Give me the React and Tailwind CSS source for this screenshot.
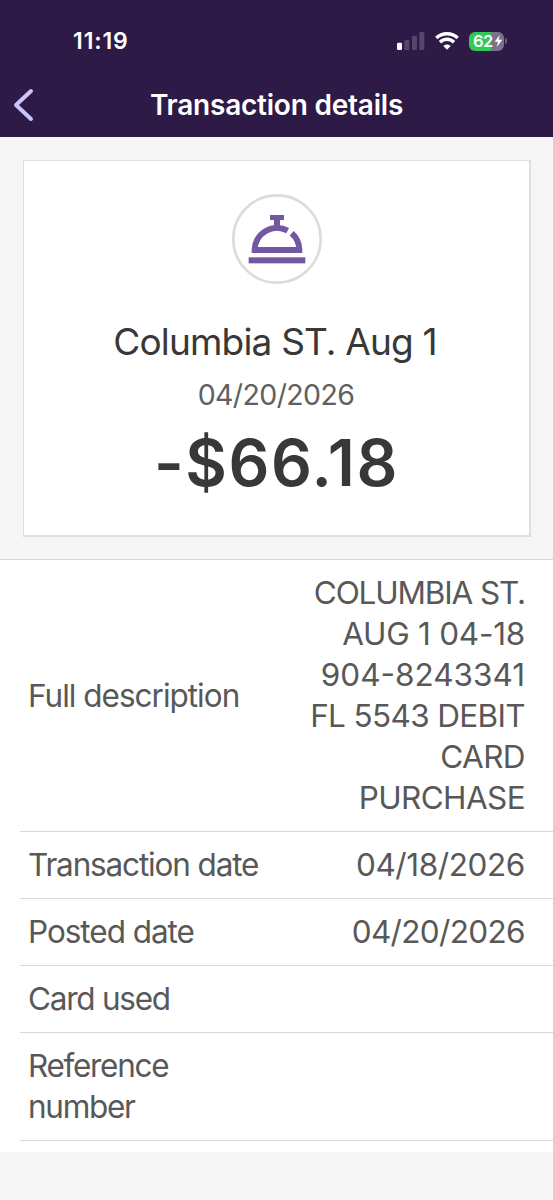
import React from "react";

const rows = [
    {
        label: "Full description",
        labelClass: "tracking-[-1px]",
        lines: [
            { text: "COLUMBIA ST.", className: "tracking-[-1.15px]" },
            { text: "AUG 1 04-18", className: "tracking-[-0.25px]" },
            { text: "904-8243341", className: "tracking-[0px]" },
            { text: "FL 5543 DEBIT", className: "tracking-[-0.65px]" },
            { text: "CARD", className: "tracking-[-0.6px]" },
            { text: "PURCHASE", className: "tracking-[-0.6px]" },
        ],
    },
    {
        label: "Transaction date",
        labelClass: "tracking-[-1.15px]",
        lines: [{ text: "04/18/2026", className: "tracking-[-0.4px]" }],
    },
    {
        label: "Posted date",
        labelClass: "tracking-[-1.04px]",
        lines: [{ text: "04/20/2026", className: "tracking-[-0.65px]" }],
    },
    { label: "Card used", labelClass: "tracking-[-1.25px]", lines: [] },
    { label: "Reference number", labelClass: "tracking-[-1.3px]", lines: [] },
];

const SignalIcon = () => (
    <svg className="h-[18px] w-7" viewBox="0 0 84 54">
        <rect x="0" y="32" width="15" height="22" rx="4" fill="#fff" />
        <rect x="22" y="24" width="15" height="30" rx="4" fill="#56456c" />
        <rect x="45" y="12" width="15" height="42" rx="4" fill="#56456c" />
        <rect x="67" y="0" width="15" height="54" rx="4" fill="#56456c" />
    </svg>
);

const WifiIcon = () => (
    <svg className="h-[18px] w-6" viewBox="0 0 72 54" fill="none" stroke="#fff" strokeWidth="10.5">
        <path d="M4 18 C21 1 51 1 68 18" />
        <path d="M15 31 C27 19 45 19 57 31" />
        <path d="M25 42 C31 36 41 36 47 42 L36 53 Z" fill="#fff" stroke="none" />
    </svg>
);

const BatteryIcon = () => (
    <div className="flex items-center gap-px">
        <div className="flex h-[19px] w-[35px] items-center rounded-[6px] bg-[linear-gradient(90deg,#34c759_63%,#7d728c_63%)] pl-1">
            <span className="text-[16.5px] leading-none font-semibold tracking-[-0.5px] text-white">62</span>
            <svg className="ml-px h-3 w-[9px]" viewBox="0 0 27 36" fill="#fff">
                <path d="M17 0 L2 20 H12 L8 36 L25 14 H14 Z" />
            </svg>
        </div>
        <div className="h-[6px] w-[2px] rounded-r-full bg-[#6c607c]" />
    </div>
);

const BellIcon = () => (
    <svg className="h-[90px] w-[90px]" viewBox="0 0 270 270" fill="none">
        <circle cx="135" cy="135" r="131" stroke="#dcdcdc" strokeWidth="8" />
        <g fill="#7357a0">
            <path d="M114 63 H156 V78 H144 V98 H126 V78 H114 Z" />
            <rect x="50" y="190" width="170" height="18" />
        </g>
        <path
            d="M167 110 A67 67 0 0 0 68 168 H202 A67 67 0 0 0 179 118"
            stroke="#7357a0"
            strokeWidth="18"
        />
    </svg>
);

const DetailRow = ({ row }) => (
    <div className="ml-5 flex items-center justify-between border-b border-[#d8d8d8] pt-3 pr-7 pb-[13px] pl-2">
        <div className={`w-[235px] ${row.labelClass}`}>{row.label}</div>
        <div className="text-right whitespace-nowrap">
            {row.lines.map((line) => (
                <div key={line.text} className={line.className}>
                    {line.text}
                </div>
            ))}
        </div>
    </div>
);

const App = () => {
    return (
        <div className="h-[1200px] w-[553px] overflow-hidden bg-[#f6f6f6] font-['Inter',sans-serif]">
            <header className="h-[137px] bg-[#2e1a47] text-white">
                <div className="flex h-[72px] items-center justify-between pt-[10px] pr-[46px] pl-[73px]">
                    <span className="text-[23px] font-semibold tracking-[0.9px]">11:19</span>
                    <div className="flex items-center gap-[10px]">
                        <SignalIcon />
                        <WifiIcon />
                        <BatteryIcon />
                    </div>
                </div>
                <div className="grid h-[65px] grid-cols-[60px_1fr_60px] items-center">
                    <svg className="ml-3 h-9 w-6" viewBox="0 0 24 36" fill="none">
                        <path d="M19 4 L4 18 L19 32" stroke="#c9c5fa" strokeWidth="4" strokeLinecap="round" strokeLinejoin="round" />
                    </svg>
                    <h1 className="text-center text-[28px] font-semibold tracking-[-0.22px] whitespace-nowrap">Transaction details</h1>
                </div>
            </header>

            <section className="border-b border-[#d8d8d8] pt-[23px] pr-[22px] pb-[22px] pl-[23px]">
                <div className="flex h-[377px] flex-col items-center border-t border-r-2 border-b-2 border-l border-[#dedede] bg-white pt-[33px]">
                    <BellIcon />
                    <div className="mt-[34px] mr-[3px] text-[37px] leading-[48px] tracking-[-0.82px] text-[#383838]">Columbia ST. Aug 1</div>
                    <div className="mt-[9px] mr-px text-[28.5px] leading-[40px] tracking-[-0.6px] text-[#606060]">04/20/2026</div>
                    <div className="mt-[10px] text-[64px] leading-[76px] font-semibold tracking-[1.6px] text-[#383838]">-$66.18</div>
                </div>
            </section>

            <section className="bg-white pb-[11px] text-[31.5px] leading-[41px] text-[#585858]">
                {rows.map((row) => (
                    <DetailRow key={row.label} row={row} />
                ))}
            </section>
        </div>
    );
};

export default App;
